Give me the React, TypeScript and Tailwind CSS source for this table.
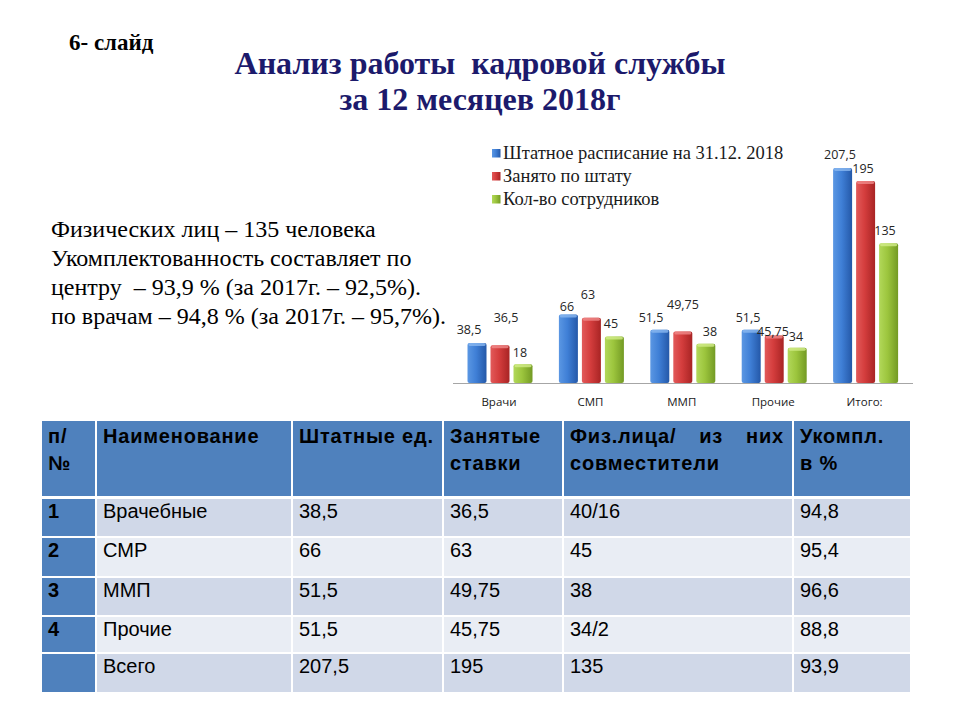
const bars = [
  { label: "Врачи", values: [38.5, 36.5, 18] },
  { label: "СМП", values: [66, 63, 45] },
  { label: "ММП", values: [51.5, 49.75, 38] },
  { label: "Прочие", values: [51.5, 45.75, 34] },
  { label: "Итого:", values: [207.5, 195, 135] },
];

// data labels placed where the original chart had them (page coords)
const dataLabels: [string, number, number][] = [
  ["38,5", 469, 329], ["36,5", 506, 317], ["18", 520, 352],
  ["66", 567, 306], ["63", 588, 294], ["45", 611, 323],
  ["51,5", 651, 317], ["49,75", 683, 304], ["38", 710, 331],
  ["51,5", 748, 317], ["45,75", 773, 331], ["34", 796, 336],
  ["207,5", 840, 154], ["195", 863, 168], ["135", 885, 230],
];

const series = ["blue", "red", "green"];
const caps = ["#8ab8f0", "#f08a8a", "#d2ec8a"];

const legend = [
  { text: "Штатное расписание на 31.12. 2018", fill: "url(#blue)" },
  { text: "Занято по штату", fill: "url(#red)" },
  { text: "Кол-во сотрудников", fill: "url(#green)" },
];

function Chart() {
  const base = 383;
  const scale = 1.036;
  return (
    <svg width="470" height="275" viewBox="445 140 470 275" className="shrink-0">
      <defs>
        <linearGradient id="blue" x1="0" x2="1" y1="0" y2="0">
          <stop offset="0" stopColor="#5b97e3" />
          <stop offset="0.45" stopColor="#3f7fd6" />
          <stop offset="1" stopColor="#2458a8" />
        </linearGradient>
        <linearGradient id="red" x1="0" x2="1" y1="0" y2="0">
          <stop offset="0" stopColor="#e25a5a" />
          <stop offset="0.45" stopColor="#d43d3d" />
          <stop offset="1" stopColor="#a82424" />
        </linearGradient>
        <linearGradient id="green" x1="0" x2="1" y1="0" y2="0">
          <stop offset="0" stopColor="#b2d85a" />
          <stop offset="0.45" stopColor="#9cc53d" />
          <stop offset="1" stopColor="#739a24" />
        </linearGradient>
      </defs>

      {legend.map((l, i) => (
        <g key={l.text}>
          <rect x="492" y={149 + i * 23} width="8.5" height="8.5" fill={l.fill} />
          <text
            x="503"
            y={159 + i * 23}
            fontFamily="'Liberation Serif', serif"
            fontSize="18.5"
            fill="#1a1a1a"
          >
            {l.text}
          </text>
        </g>
      ))}

      <line x1="453" x2="913" y1={base + 0.5} y2={base + 0.5} stroke="#a6a6a6" strokeWidth="1" />

      {bars.map((g, gi) => (
        <g key={g.label}>
          {g.values.map((v, si) => {
            const x = 467.5 + gi * 91.4 + si * 23;
            const h = v * scale;
            return (
              <g key={si}>
                <rect x={x} y={base - h} width="19" height={h} rx="2" fill={`url(#${series[si]})`} />
                <rect x={x + 1} y={base - h} width="17" height="3" rx="1.5" fill={caps[si]} opacity="0.8" />
              </g>
            );
          })}
          <text
            x={499 + gi * 91.4}
            y="406"
            textAnchor="middle"
            fontFamily="'Open Sans', sans-serif"
            fontSize="11.5"
            fill="#1a1a1a"
          >
            {g.label}
          </text>
        </g>
      ))}

      {dataLabels.map(([t, x, y], i) => (
        <text
          key={i}
          x={x}
          y={y + 4.5}
          textAnchor="middle"
          fontFamily="'Open Sans', sans-serif"
          fontSize="12.5"
          fill="#262626"
        >
          {t}
        </text>
      ))}
    </svg>
  );
}

const rows = [
  ["1", "Врачебные", "38,5", "36,5", "40/16", "94,8"],
  ["2", "СМР", "66", "63", "45", "95,4"],
  ["3", "ММП", "51,5", "49,75", "38", "96,6"],
  ["4", "Прочие", "51,5", "45,75", "34/2", "88,8"],
  ["", "Всего", "207,5", "195", "135", "93,9"],
];
const rowHeights = ["h-[40px]", "h-[40px]", "h-[39px]", "h-[37px]", "h-[39px]"];

const th = "border-2 border-t-0 border-b-[3px] border-white pt-[2px] align-top font-bold leading-[27px] tracking-[0.8px]";

export default function App() {
  return (
    <div className="w-[960px] h-[720px] bg-white overflow-hidden">
      {/* Header */}
      <header className="pt-[30px]">
        <div className="pl-[69px] text-[23px] leading-[26px] font-bold text-black font-['Liberation_Serif',serif]">
          6- слайд
        </div>
        <h1 className="-mt-[11px] text-center text-[32px] leading-[36px] font-bold text-[#1c1a6c] font-['Liberation_Serif',serif]">
          <span className="block whitespace-pre">Анализ работы  кадровой службы</span>
          <span className="block">за 12 месяцев 2018г</span>
        </h1>
      </header>

      {/* Text + chart */}
      <section className="mt-[23px] flex h-[275px]">
        <div className="w-[445px] shrink-0 pl-[51px] pt-[75px] text-[24px] leading-[29px] text-black font-['Liberation_Serif',serif]">
          <span className="block whitespace-nowrap">Физических лиц – 135 человека</span>
          <span className="block whitespace-nowrap">Укомплектованность составляет по</span>
          <span className="block whitespace-pre">центру  – 93,9 % (за 2017г. – 92,5%).</span>
          <span className="block whitespace-nowrap">по врачам – 94,8 % (за 2017г. – 95,7%).</span>
        </div>
        <Chart />
      </section>

      {/* Table */}
      <table className="mt-[6px] ml-[42px] w-[868px] table-fixed border-collapse text-[20px] text-black font-['Liberation_Sans',sans-serif]">
        <colgroup>
          <col className="w-[54px]" />
          <col className="w-[196px]" />
          <col className="w-[151px]" />
          <col className="w-[120px]" />
          <col className="w-[230px]" />
          <col className="w-[117px]" />
        </colgroup>
        <thead>
          <tr className="h-[76px] bg-[#4f81bd]">
            <th className={`${th} border-l-0 px-[6px] text-left`}>
              п/<br />№
            </th>
            <th className={`${th} px-[6px] text-left`}>Наименование</th>
            <th className={`${th} px-[6px] text-left`}>Штатные ед.</th>
            <th className={`${th} px-[6px] text-left`}>Занятые ставки</th>
            <th className={`${th} pl-[6px] pr-[8px] text-justify`}>Физ.лица/ из них совместители</th>
            <th className={`${th} border-r-0 px-[6px] text-left`}>
              Укомпл.<br />в %
            </th>
          </tr>
        </thead>
        <tbody>
          {rows.map((r, i) => (
            <tr key={i} className={`${rowHeights[i]} ${i % 2 === 0 ? "bg-[#d0d8e8]" : "bg-[#e9edf4]"}`}>
              {r.map((c, j) => (
                <td
                  key={j}
                  className={`border-2 border-white px-[6px] pt-0 align-top leading-[24px] ${
                    j === 0 ? "border-l-0 bg-[#4f81bd] font-bold" : ""
                  } ${j === 5 ? "border-r-0" : ""} ${i === rows.length - 1 ? "border-b-0" : ""}`}
                >
                  {c}
                </td>
              ))}
            </tr>
          ))}
        </tbody>
      </table>
    </div>
  );
}
